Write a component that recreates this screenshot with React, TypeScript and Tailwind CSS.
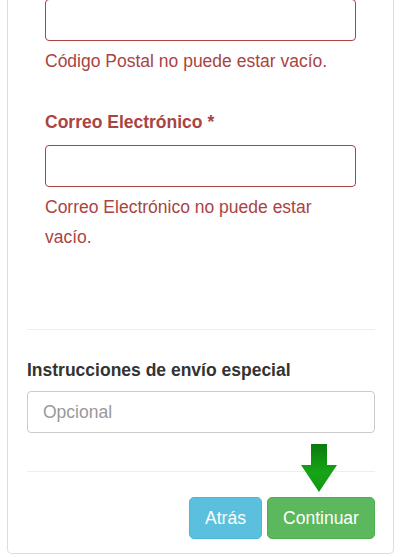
import React from "react";

function Arrow() {
  return (
    <svg width="38" height="50" viewBox="0 0 38 50" className="absolute left-[300px] top-[443px]">
      <defs>
        <linearGradient id="g" x1="0" y1="0" x2="0" y2="1">
          <stop offset="0" stopColor="#0b7a0b" />
          <stop offset="0.6" stopColor="#17a417" />
          <stop offset="1" stopColor="#0f960f" />
        </linearGradient>
      </defs>
      <path d="M11 1 H27 V22 H37 L19 49 L1 22 H11 Z" fill="url(#g)" />
    </svg>
  );
}

export default function App() {
  return (
    <div
      className="relative w-[400px] h-[557px] overflow-hidden bg-white"
      style={{ fontFamily: '"Liberation Sans", Arial, sans-serif' }}
    >
      <div className="ml-[7px] mr-[6px] h-[555px] border-x border-b border-[#dddddd] rounded-b-[5px] pl-[19px] pr-[18px]">
        <div className="pl-[18px] pr-[19px]">
          <div className="mt-[-1px] h-[42px] border border-[#a94442] rounded-[4px]" />
          <div className="mt-[5px] text-[17.5px] leading-[30px] text-[#a94442]">
            Código Postal no puede estar vacío.
          </div>
          <div className="mt-[34px] text-[17.5px] leading-[24px] font-bold text-[#a94442]">
            Correo Electrónico *
          </div>
          <div className="mt-[11px] h-[42px] border border-[#a94442] rounded-[4px]" />
          <div className="mt-[5px] text-[17.5px] leading-[30px] text-[#a94442] pr-[30px]">
            Correo Electrónico no puede estar vacío.
          </div>
        </div>
        <div className="mt-[77px] h-px bg-[#eeeeee]" />
        <div className="mt-[28px] text-[17.5px] leading-[24px] font-bold text-[#333333]">
          Instrucciones de envío especial
        </div>
        <div className="mt-[9px] h-[42px] border border-[#cccccc] rounded-[4px] flex items-center pl-[15px] text-[17.5px] text-[#999999]">
          Opcional
        </div>
        <div className="mt-[38px] h-px bg-[#eeeeee]" />
        <div className="mt-[25px] flex justify-end gap-[5px]">
          <div className="w-[73px] h-[42px] rounded-[5px] bg-[#5bc0de] border border-[#46b8da] text-white text-[17.5px] flex items-center justify-center">
            Atrás
          </div>
          <div className="w-[108px] h-[42px] rounded-[5px] bg-[#5cb85c] border border-[#4cae4c] text-white text-[17.5px] flex items-center justify-center">
            Continuar
          </div>
        </div>
      </div>
      <Arrow />
    </div>
  );
}
